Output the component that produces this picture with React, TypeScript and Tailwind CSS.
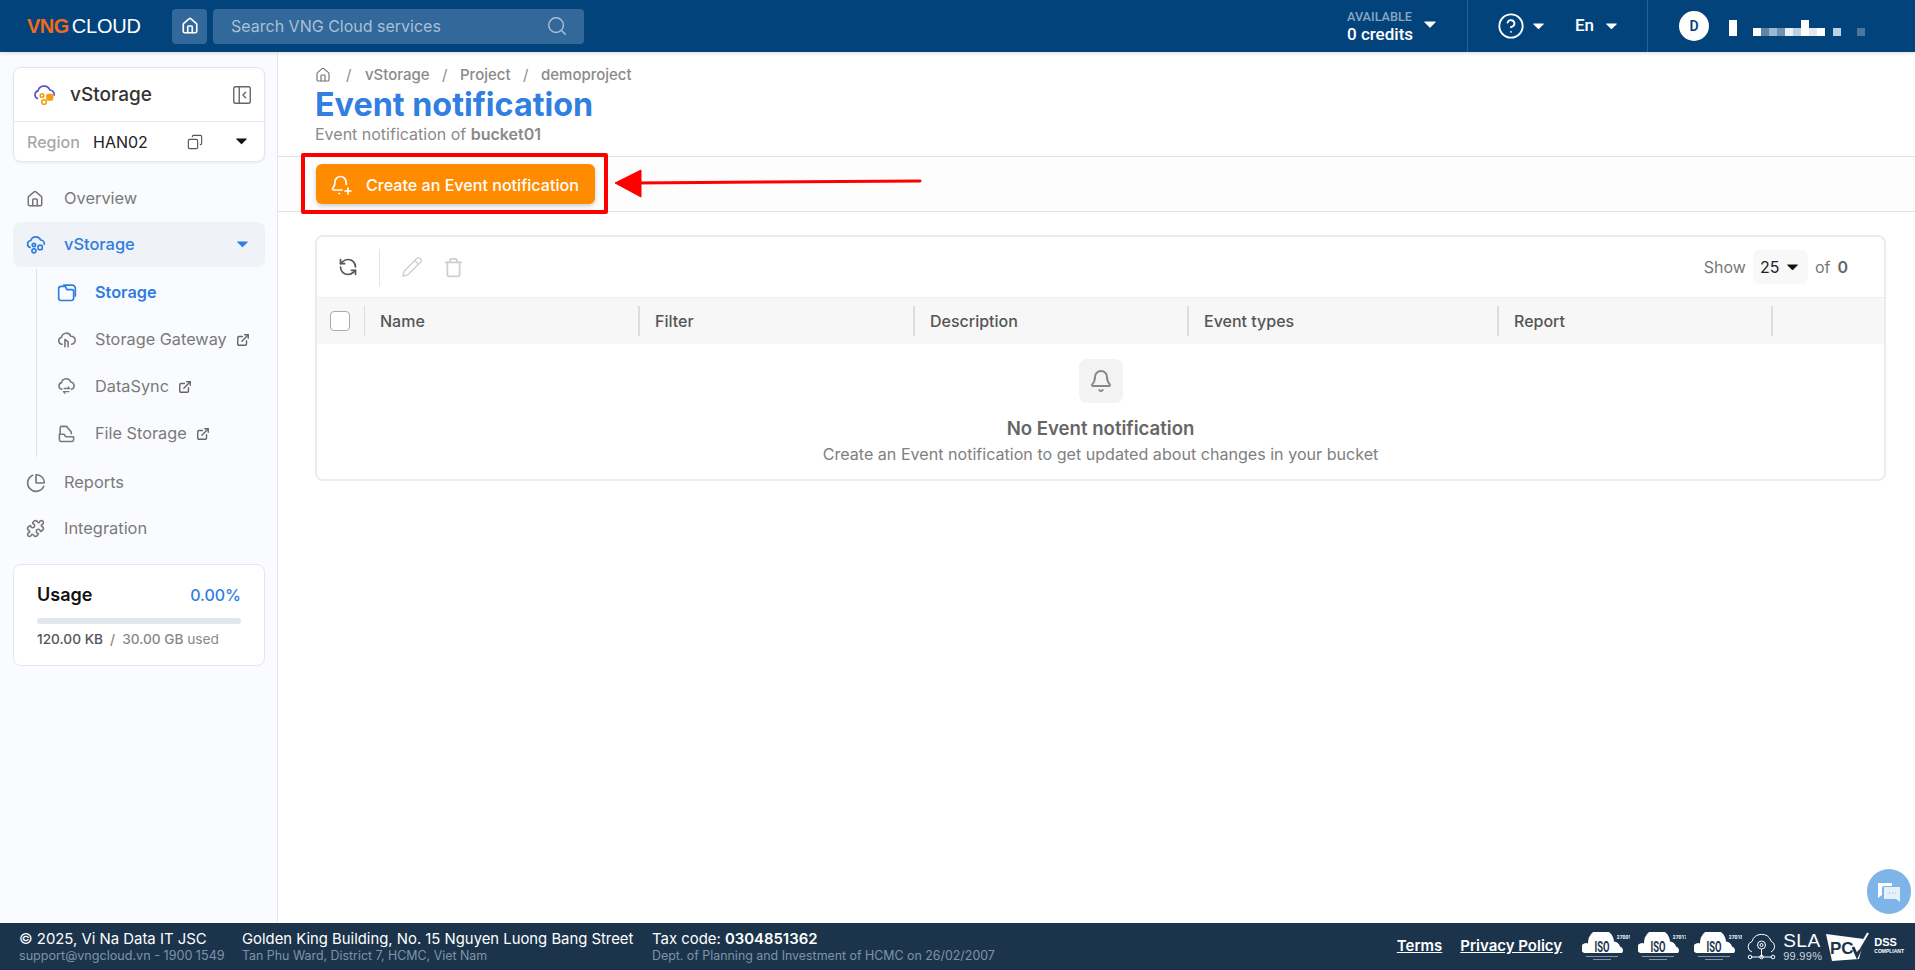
import { ChartPie, Copy, ExternalLink, House, PanelLeftClose, Pencil, Puzzle, RefreshCcw, Search, Trash, Bell, CircleHelp } from "lucide-react";

const Caret = ({ className = "", size = 12 }: { className?: string; size?: number }) => (
    <svg width={size} height={size * 0.6} viewBox="0 0 10 6" className={className} fill="currentColor">
        <path d="M0.6 0.4h8.8a.4.4 0 0 1 .3.7L5.3 5.5a.4.4 0 0 1-.6 0L.3 1.1a.4.4 0 0 1 .3-.7z" />
    </svg>
);

const CLOUD = "M6.5 18a4.5 4.5 0 0 1-.7-8.9A6 6 0 0 1 17.4 8a5 5 0 0 1 1.1 10";

function VStorageIcon({ className = "" }: { className?: string }) {
    return (
        <svg width="20" height="20" viewBox="0 0 24 24" fill="none" stroke="currentColor" strokeWidth="2" className={className}>
            <path d="M5 15a4.3 4.3 0 0 1 .8-8.4A6.3 6.3 0 0 1 17.6 6a4.8 4.8 0 0 1 4.4 5" strokeLinecap="round" />
            <circle cx="9.5" cy="12" r="2" />
            <circle cx="9.5" cy="19" r="2.4" />
            <rect x="14.5" y="12.5" width="5" height="5" rx="1" />
        </svg>
    );
}

function LogoIcon() {
    return (
        <svg width="24" height="24" viewBox="0 0 24 24" fill="none" strokeWidth="1.6">
            <path d="M4.5 15.5a4 4 0 0 1 .5-7.6A6.2 6.2 0 0 1 16.8 7a4.6 4.6 0 0 1 4.4 5.2" stroke="#5b4fc7" strokeLinecap="round" />
            <circle cx="9" cy="12.5" r="1.8" stroke="#f59e0b" />
            <circle cx="11" cy="19" r="2.3" stroke="#f59e0b" />
            <rect x="14" y="11.5" width="5.5" height="5.5" rx="1" fill="#f59e0b" stroke="#f59e0b" />
        </svg>
    );
}

function FolderIcon() {
    return (
        <svg width="20" height="20" viewBox="0 0 24 24" fill="none" stroke="currentColor" strokeWidth="2" strokeLinecap="round" strokeLinejoin="round">
            <path d="M2 8v10a3 3 0 0 0 3 3h12a3 3 0 0 0 3-3V10a2 2 0 0 0-2-2h-6l-2-4H5a3 3 0 0 0-3 3z" />
            <path d="M8 2.5h10a4 4 0 0 1 4 4v9" />
        </svg>
    );
}

function GatewayIcon() {
    return (
        <svg width="19" height="19" viewBox="0 0 24 24" fill="none" stroke="currentColor" strokeWidth="2" strokeLinecap="round" strokeLinejoin="round">
            <path d={CLOUD} />
            <path d="M10 21v-9l4 3v6" />
        </svg>
    );
}

function SyncIcon() {
    return (
        <svg width="19" height="19" viewBox="0 0 24 24" fill="none" stroke="currentColor" strokeWidth="2" strokeLinecap="round" strokeLinejoin="round">
            <path d="M6 15.5a4.3 4.3 0 0 1-.2-8.4A6 6 0 0 1 17.4 6.4a4.7 4.7 0 0 1 1 9.1" />
            <path d="M9 14.5h7l-2-2M15 18.5H8l2 2" strokeWidth="1.7" />
        </svg>
    );
}

function FileStorageIcon() {
    return (
        <svg width="19" height="19" viewBox="0 0 24 24" fill="none" stroke="currentColor" strokeWidth="2" strokeLinejoin="round">
            <path d="M4 13V5a2 2 0 0 1 2-2h6l6 7v3" />
            <path d="M3 13h6l2 3h10v4a2 2 0 0 1-2 2H5a2 2 0 0 1-2-2z" />
        </svg>
    );
}

function BellPlus() {
    return (
        <svg width="24" height="24" viewBox="0 0 24 24" fill="none" stroke="currentColor" strokeWidth="1.7" strokeLinecap="round" strokeLinejoin="round">
            <path d="M13 18H4.5a1 1 0 0 1-.8-1.6C5 14.8 6 13.5 6 10a5.5 5.5 0 0 1 11 0c0 1 .1 1.8.3 2.5" />
            <path d="M10 21.5h.5M19 16v6M16 19h6" />
        </svg>
    );
}

function NavItem({ icon, label, active = false }: { icon: React.ReactNode; label: string; active?: boolean }) {
    return (
        <div className={`flex items-center h-[45px] rounded-lg pl-[13px] pr-[17px] ml-[13px] mr-[12px] text-[16.4px] ${active ? "bg-[#eff2f7] text-[#2f7de1] font-medium" : "text-[#7a7a7a]"}`}>
            <span className={active ? "w-[38px]" : "w-[38px] text-[#777777]"}>{icon}</span>
            <span className="flex-1">{label}</span>
            {active && <Caret size={11} className="text-[#2f7de1]" />}
        </div>
    );
}

function SubItem({ icon, label, active = false, external = false }: { icon: React.ReactNode; label: string; active?: boolean; external?: boolean }) {
    return (
        <div className={`flex items-center h-[47px] pl-[20px] text-[16.3px] ${active ? "text-[#2f7de1] font-semibold" : "text-[#7a7a7a]"}`}>
            <span className="w-[38px] flex">{icon}</span>
            <span>{label}</span>
            {external && <ExternalLink size={14} strokeWidth={2.4} className="ml-[9px] text-[#666666]" />}
        </div>
    );
}

function Iso({ code }: { code: string }) {
    return (
        <svg width="48" height="30" viewBox="0 0 48 30">
            <path d="M2 21a5 5 0 0 1 4-9.5 13 13 0 0 1 26-2 7 7 0 0 1 6 5 4 4 0 0 1 2 6.5z" fill="#ffffff" />
            <text x="20" y="19.5" textAnchor="middle" fontSize="15" fontWeight="700" fill="#1b344c" fontFamily="Roboto, sans-serif" textLength="15" lengthAdjust="spacingAndGlyphs">ISO</text>
            <text x="42" y="7" textAnchor="middle" fontSize="5" fontWeight="700" fill="#ffffff" fontFamily="Roboto, sans-serif">{code}</text>
            <rect x="4" y="24" width="32" height="1" fill="#8496a6" />
            <rect x="11" y="27" width="18" height="1" fill="#8496a6" />
        </svg>
    );
}

const COLUMNS = [
    { label: "Name", w: "w-[275px]" },
    { label: "Filter", w: "w-[275px]" },
    { label: "Description", w: "w-[274px]" },
    { label: "Event types", w: "w-[310px]" },
    { label: "Report", w: "w-[274px]" },
];

const PIXELS = ["#ffffff", "#5a86ad", "#9db7cf", "#6b92b6", "#e8eef4", "#c0d0df"];

export default function App() {
    return (
        <div className="relative h-[970px] w-[1915px] flex flex-col overflow-hidden bg-white font-['Inter',sans-serif] text-[#666666]">
            {/* top bar */}
            <header className="h-[52px] shrink-0 bg-[#03437b] flex items-center text-white shadow-[0_1px_4px_rgba(0,0,0,0.15)] z-10">
                <div className="w-[172px] pl-[27px] flex items-baseline font-['Liberation_Sans',sans-serif] text-[20px] leading-none">
                    <span className="text-[#f06a1d] font-bold tracking-[-0.5px]">VNG</span>
                    <span className="ml-[3px] tracking-[-0.2px]">CLOUD</span>
                </div>
                <div className="w-[35px] h-[35px] rounded bg-[#33689a] flex items-center justify-center">
                    <House size={18} strokeWidth={2.2} />
                </div>
                <div className="ml-[6px] w-[371px] h-[35px] rounded bg-[#33689a] flex items-center pl-[18px] pr-[16px] text-[16px] text-[#a9c0d6]">
                    <span className="flex-1">Search VNG Cloud services</span>
                    <Search size={22} strokeWidth={1.6} />
                </div>
                <div className="flex-1" />
                <div className="flex items-center h-full">
                    <div className="w-[121px] pl-[1px] flex items-center font-['Roboto',sans-serif]">
                        <div className="flex flex-col mt-[2px]">
                            <span className="text-[12.7px] leading-[14px] font-medium text-[#8aa6c2]">AVAILABLE</span>
                            <span className="text-[17px] leading-[20px] font-medium">0 credits</span>
                        </div>
                        <Caret size={12} className="ml-[11px] -mt-[2px]" />
                    </div>
                    <div className="w-[180px] h-full border-l border-[#2a6094] flex items-center pl-[29px] font-['Roboto',sans-serif]">
                        <CircleHelp size={28} strokeWidth={1.6} />
                        <Caret size={11} className="ml-[8px]" />
                        <span className="ml-[31px] text-[17px] font-medium">En</span>
                        <Caret size={11} className="ml-[12px]" />
                    </div>
                    <div className="w-[268px] h-full border-l border-[#2a6094] flex items-center pl-[31px]">
                        <div className="w-[30px] h-[30px] rounded-full bg-white text-[#03437b] flex items-center justify-center text-[14px] font-semibold font-['Roboto',sans-serif]">D</div>
                        {/* username is pixelated in the screenshot */}
                        <div className="ml-[20px] flex items-end h-[16px] mt-[4px]">
                            <div className="w-[8px] h-[16px] bg-white mr-[16px]" />
                            {PIXELS.map(c => <div key={c} className="w-[8px] h-[8px]" style={{ background: c }} />)}
                            <div className="w-[8px] h-[16px] bg-white" />
                            <div className="w-[8px] h-[8px] bg-[#e0e8f0]" />
                            <div className="w-[8px] h-[8px] bg-white mr-[8px]" />
                            <div className="w-[8px] h-[8px] bg-[#c0d0df] mr-[16px]" />
                            <div className="w-[8px] h-[8px] bg-[#4a78a3]" />
                        </div>
                    </div>
                </div>
            </header>

            <div className="flex-1 flex min-h-0">
                {/* sidebar */}
                <aside className="w-[278px] shrink-0 bg-[#fafbfe] border-r border-[#e3e6f0] pt-[15px]">
                    <div className="ml-[13px] mr-[12px] rounded-lg bg-white border border-[#e3e6ee] shadow-[0_1px_3px_rgba(0,0,0,0.06)]">
                        <div className="h-[54px] flex items-center pl-[19px] pr-[11px] border-b border-[#e3e6ee]">
                            <LogoIcon />
                            <span className="ml-[13px] pt-[2px] flex-1 text-[19px] font-medium text-[#333333]">vStorage</span>
                            <PanelLeftClose size={22} strokeWidth={1.5} className="text-[#666666]" />
                        </div>
                        <div className="h-[39px] flex items-center pl-[13px] pr-[17px] text-[16px]">
                            <span className="w-[66px] font-medium text-[#a8a8a8]">Region</span>
                            <span className="flex-1 text-[#222222]">HAN02</span>
                            <Copy size={16} strokeWidth={1.7} className="text-[#555555] mr-[33px] scale-x-[-1]" />
                            <Caret size={11} className="text-[#111111]" />
                        </div>
                    </div>
                    <div className="mt-[14px]">
                        <div className="mb-[1px]"><NavItem icon={<House size={18} />} label="Overview" /></div>
                        <NavItem icon={<VStorageIcon />} label="vStorage" active />
                        <div className="ml-[36px] mt-[2px] border-l border-[#e2e2e6] flex flex-col">
                            <SubItem icon={<FolderIcon />} label="Storage" active />
                            <SubItem icon={<GatewayIcon />} label="Storage Gateway" external />
                            <SubItem icon={<SyncIcon />} label="DataSync" external />
                            <SubItem icon={<FileStorageIcon />} label="File Storage" external />
                        </div>
                        <div className="mt-[3px]">
                            <div className="mb-[1px]"><NavItem icon={<ChartPie size={20} />} label="Reports" /></div>
                            <NavItem icon={<Puzzle size={19} />} label="Integration" />
                        </div>
                    </div>
                    <div className="ml-[13px] mr-[12px] mt-[13px] h-[102px] rounded-lg bg-white border border-[#e3e6ee] px-[23px] pt-[16px]">
                        <div className="flex items-center justify-between h-[27px]">
                            <span className="text-[18px] font-semibold text-[#111111]">Usage</span>
                            <span className="text-[16px] font-medium text-[#2f7de1]">0.00%</span>
                        </div>
                        <div className="mt-[10px] h-[6px] rounded-full bg-[#e2e6ee]" />
                        <div className="mt-[5px] text-[13.7px] font-medium text-[#888888] whitespace-nowrap">
                            <span className="text-[#555555]">120.00 KB</span>
                            <span className="mx-[7px]">/</span>
                            <span>30.00 GB</span> <span className="font-normal">used</span>
                        </div>
                    </div>
                </aside>

                <main className="flex-1 min-w-0">
                    <div className="h-[105px] border-b border-[#e2e2e2] pl-[37px] pt-[13px]">
                        <div className="flex items-center h-[20px] text-[15px] font-medium text-[#8a8a8a]">
                            <House size={16} strokeWidth={1.8} className="text-[#777777]" />
                            <span className="ml-[15px] mr-[13.5px] font-normal">/</span>
                            <span>vStorage</span>
                            <span className="mx-[12.5px] font-normal">/</span>
                            <span>Project</span>
                            <span className="mx-[12.5px] font-normal">/</span>
                            <span>demoproject</span>
                        </div>
                        <h1 className="text-[32.3px] leading-[39px] font-bold text-[#317fe3]">Event notification</h1>
                        <div className="text-[16px] leading-[20px] text-[#8a8a8a]">
                            Event notification of <span className="font-semibold">bucket01</span>
                        </div>
                    </div>
                    <div className="h-[55px] border-b border-[#e2e2e2] bg-[#fdfdfd] pl-[38px] flex items-center">
                        <button className="w-[279px] h-[40px] rounded-md bg-[#ff8b00] text-white text-[16.1px] font-medium flex items-center pl-[13px] shadow-[0_2px_4px_rgba(0,0,0,0.2)]">
                            <BellPlus />
                            <span className="ml-[13px] mt-[2px]">Create an Event notification</span>
                        </button>
                    </div>

                    {/* table card */}
                    <div className="ml-[37px] mr-[29px] mt-[23px] h-[246px] rounded-lg border-2 border-[#ececec] bg-white">
                        <div className="h-[60px] flex items-center pl-[21px] pr-[36px]">
                            <RefreshCcw size={20} strokeWidth={2} className="text-[#555555]" />
                            <div className="ml-[21px] w-px h-[37px] bg-[#e4e4e4]" />
                            <Pencil size={22} strokeWidth={1.5} className="ml-[21px] text-[#cfcfcf]" />
                            <Trash size={21} strokeWidth={2} className="ml-[20px] text-[#cfcfcf]" />
                            <div className="flex-1" />
                            <span className="text-[16px] text-[#777777]">Show</span>
                            <div className="ml-[7px] w-[55px] h-[34px] rounded-md bg-[#f8f8f8] flex items-center pl-[7px] text-[16px] text-[#222222]">
                                25
                                <Caret size={11} className="ml-[8px] text-[#111111]" />
                            </div>
                            <span className="ml-[7px] text-[16px] text-[#777777]">of</span>
                            <span className="ml-[7px] text-[16px] font-semibold text-[#666666]">0</span>
                        </div>
                        <div className="h-[47px] bg-[#f7f7f7] border-t border-[#eeeeee] flex items-center text-[16px] font-medium text-[#555555]">
                            <div className="w-[48px] h-[30px] flex items-center pl-[13px] border-r border-[#dddddd]">
                                <div className="w-[20px] h-[20px] rounded-[4px] border border-[#aaaaaa] bg-white" />
                            </div>
                            {COLUMNS.map(c => (
                                <div key={c.label} className={`${c.w} h-[30px] flex items-center pl-[15px] pb-[1px] border-r-2 border-[#dddddd]`}>{c.label}</div>
                            ))}
                        </div>
                        <div className="flex flex-col items-center pt-[15px]">
                            <div className="w-[44px] h-[44px] rounded-lg bg-[#f3f3f3] flex items-center justify-center">
                                <Bell size={24} strokeWidth={2} className="text-[#888888]" />
                            </div>
                            <div className="mt-[13px] text-[18.6px] leading-[24px] font-semibold text-[#666666]">No Event notification</div>
                            <div className="mt-[3px] text-[16.1px] leading-[22px] text-[#808080]">Create an Event notification to get updated about changes in your bucket</div>
                        </div>
                    </div>
                </main>
            </div>

            {/* footer */}
            <footer className="h-[47px] shrink-0 bg-[#1b344c] flex items-center pl-[19px] text-white z-10">
                <div className="w-[223px] flex flex-col whitespace-nowrap">
                    <span className="text-[14.9px] leading-[17px]">© 2025, Vi Na Data IT JSC</span>
                    <span className="text-[12.6px] leading-[15px] text-[#7f93a6]">support@vngcloud.vn - 1900 1549</span>
                </div>
                <div className="w-[410px] flex flex-col whitespace-nowrap">
                    <span className="text-[14.85px] leading-[17px]">Golden King Building, No. 15 Nguyen Luong Bang Street</span>
                    <span className="text-[12.4px] leading-[15px] text-[#7f93a6]">Tan Phu Ward, District 7, HCMC, Viet Nam</span>
                </div>
                <div className="flex flex-col whitespace-nowrap">
                    <span className="text-[14.9px] leading-[17px]">Tax code: <span className="font-semibold">0304851362</span></span>
                    <span className="text-[12.4px] leading-[15px] text-[#7f93a6]">Dept. of Planning and Investment of HCMC on 26/02/2007</span>
                </div>
                <div className="flex-1" />
                <a className="text-[15px] font-semibold underline">Terms</a>
                <a className="ml-[18px] text-[15px] font-semibold underline">Privacy Policy</a>
                <div className="ml-[20px] flex items-center gap-[8px] pr-[11px]">
                    <Iso code="27001" />
                    <Iso code="27017" />
                    <Iso code="27018" />
                    <svg width="31" height="30" viewBox="0 0 31 30" fill="none" stroke="#ffffff" strokeWidth="1" className="-ml-[4px]">
                        <path d="M6 20a5.5 5.5 0 0 1 0-10.5A10 10 0 0 1 25 9a6 6 0 0 1 0 11" />
                        <circle cx="15.5" cy="13" r="4" />
                        <circle cx="15.5" cy="13" r="1.5" />
                        <path d="M15.5 17v8M5 25h21" />
                        <circle cx="4" cy="25" r="1.8" />
                        <circle cx="15.5" cy="25" r="1.8" />
                        <circle cx="27" cy="25" r="1.8" />
                    </svg>
                    <div className="-ml-[2px] -mr-[4px] flex flex-col font-['Liberation_Sans',sans-serif]">
                        <span className="text-[19px] leading-[18px] tracking-[0.5px]">SLA</span>
                        <span className="text-[11px] leading-[12px] tracking-[0.3px] text-[#c8d2dc]">99.99%</span>
                    </div>
                    <div className="flex items-center">
                        <svg width="44" height="30" viewBox="0 0 44 30">
                            <path d="M0 2 L38 7 L33 27 L6 29 Z" fill="#ffffff" />
                            <text x="4" y="22" fontSize="17" fontWeight="700" fill="#1b344c" fontFamily="Liberation Sans, sans-serif">PC</text>
                            <path d="M27 15l4 9L41 3" fill="none" stroke="#1b344c" strokeWidth="3" />
                            <path d="M32 18L42 1" fill="none" stroke="#ffffff" strokeWidth="2" />
                        </svg>
                        <div className="ml-[4px] flex flex-col font-['Liberation_Sans',sans-serif] -mt-[3px]">
                            <span className="text-[11px] leading-[11px] font-bold">DSS</span>
                            <span className="text-[5px] leading-[6px] font-bold">COMPLIANT</span>
                        </div>
                    </div>
                </div>
            </footer>

            {/* annotation drawn over the page */}
            <div className="absolute left-[301px] top-[153px] w-[307px] h-[61px] border-4 border-[#ff0000] rounded-[2px] pointer-events-none" />
            <svg className="absolute left-[610px] top-[165px] pointer-events-none" width="315" height="36" viewBox="0 0 315 36">
                <path d="M25 18 L310 16" stroke="#ff0000" strokeWidth="3" strokeLinecap="round" />
                <path d="M5 18 L31 5 L31 32 Z" fill="#ff0000" stroke="#ff0000" strokeLinejoin="round" />
            </svg>

            {/* chat bubble */}
            <div className="absolute left-[1867px] top-[869px] w-[44px] h-[45px] rounded-full bg-[#7fb4e8] flex items-center justify-center">
                <svg width="24" height="22" viewBox="0 0 24 22">
                    <path d="M1 2h14v3H7a2 2 0 0 0-2 2v7l-4 3z" fill="#ffffff" />
                    <path d="M7 6h16v15l-4-3H7z" fill="#e6f0fa" />
                    <path d="M12 12h1M15 12h1M18 12h1" stroke="#8ab8e6" />
                </svg>
            </div>
        </div>
    );
}
